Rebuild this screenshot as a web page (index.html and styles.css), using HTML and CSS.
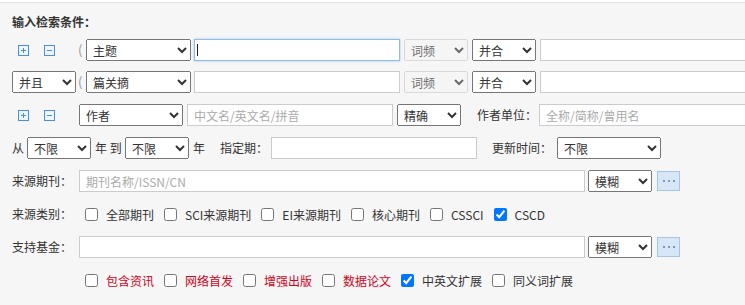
FILE: index.html
```html
<!DOCTYPE html>
<html lang="zh-CN">
<head>
<meta charset="utf-8">
<title>检索条件</title>
<link rel="stylesheet" href="styles.css">
</head>
<body>
<div class="panel">
  <div class="title">输入检索条件：</div>

  <div class="row r1">
    <div class="lead">
      <svg class="ico" width="11" height="11" viewBox="0 0 11 11"><rect x="0.5" y="0.5" width="10" height="10" fill="#eef5fd" stroke="#4a8fd6"/><path d="M3 5.5H8M5.5 3V8" stroke="#4a8fd6"/></svg>
      <svg class="ico" width="11" height="11" viewBox="0 0 11 11"><rect x="0.5" y="0.5" width="10" height="10" fill="#eef5fd" stroke="#4a8fd6"/><path d="M3 5.5H8" stroke="#4a8fd6"/></svg>
    </div>
    <span class="paren">(</span>
    <select class="sel sel-l"><option>主题</option></select>
    <span class="focus-wrap"><input class="inp inp-m focused" type="text"><span class="caret"></span></span>
    <select class="sel sel-s" disabled><option>词频</option></select>
    <select class="sel sel-s"><option>并合</option></select>
    <input class="inp inp-r" type="text">
  </div>

  <div class="row">
    <select class="sel sel-s sel-first"><option>并且</option></select>
    <span class="paren">(</span>
    <select class="sel sel-l"><option>篇关摘</option></select>
    <input class="inp inp-m" type="text">
    <select class="sel sel-s" disabled><option>词频</option></select>
    <select class="sel sel-s"><option>并合</option></select>
    <input class="inp inp-r" type="text">
  </div>

  <div class="row">
    <div class="lead lead3">
      <svg class="ico" width="11" height="11" viewBox="0 0 11 11"><rect x="0.5" y="0.5" width="10" height="10" fill="#eef5fd" stroke="#4a8fd6"/><path d="M3 5.5H8M5.5 3V8" stroke="#4a8fd6"/></svg>
      <svg class="ico" width="11" height="11" viewBox="0 0 11 11"><rect x="0.5" y="0.5" width="10" height="10" fill="#eef5fd" stroke="#4a8fd6"/><path d="M3 5.5H8" stroke="#4a8fd6"/></svg>
    </div>
    <select class="sel sel-l2"><option>作者</option></select>
    <input class="inp inp-m" type="text" placeholder="中文名/英文名/拼音">
    <select class="sel sel-s"><option>精确</option></select>
    <span class="lbl lbl-unit">作者单位：</span>
    <input class="inp inp-r" type="text" placeholder="全称/简称/曾用名">
  </div>

  <div class="row">
    <span class="txt t-from">从</span>
    <select class="sel sel-s"><option>不限</option></select>
    <span class="txt t-to">年 到</span>
    <select class="sel sel-s"><option>不限</option></select>
    <span class="txt t-year">年</span>
    <span class="lbl lbl-issue">指定期：</span>
    <input class="inp inp-m" type="text">
    <span class="lbl lbl-upd">更新时间：</span>
    <select class="sel sel-l2"><option>不限</option></select>
  </div>

  <div class="row">
    <span class="lbl lbl-row">来源期刊：</span>
    <input class="inp inp-w" type="text" placeholder="期刊名称/ISSN/CN">
    <select class="sel sel-s"><option>模糊</option></select>
    <span class="more"><i></i><i></i><i></i></span>
  </div>

  <div class="row">
    <span class="lbl lbl-cat">来源类别：</span>
    <label class="ck"><input type="checkbox"><span>全部期刊</span></label>
    <label class="ck"><input type="checkbox"><span>SCI来源期刊</span></label>
    <label class="ck"><input type="checkbox"><span>EI来源期刊</span></label>
    <label class="ck"><input type="checkbox"><span>核心期刊</span></label>
    <label class="ck"><input type="checkbox"><span>CSSCI</span></label>
    <label class="ck"><input type="checkbox" checked><span>CSCD</span></label>
  </div>

  <div class="row">
    <span class="lbl lbl-row">支持基金：</span>
    <input class="inp inp-w" type="text">
    <select class="sel sel-s"><option>模糊</option></select>
    <span class="more"><i></i><i></i><i></i></span>
  </div>

  <div class="row opts">
    <label class="ck red"><input type="checkbox"><span>包含资讯</span></label>
    <label class="ck red"><input type="checkbox"><span>网络首发</span></label>
    <label class="ck red"><input type="checkbox"><span>增强出版</span></label>
    <label class="ck red"><input type="checkbox"><span>数据论文</span></label>
    <label class="ck"><input type="checkbox" checked><span>中英文扩展</span></label>
    <label class="ck"><input type="checkbox"><span>同义词扩展</span></label>
  </div>
</div>
</body>
</html>
```

FILE: styles.css
```css
* { box-sizing: border-box; }

html, body {
  margin: 0;
  background: #ffffff;
}

body {
  font-family: "Noto Sans CJK SC", "Liberation Sans", sans-serif;
  font-size: 12px;
  color: #333333;
  overflow: hidden;
}

.panel {
  margin-top: 2px;
  border-top: 1px solid #e2e2e2;
  background: #f6f6f6;
  padding: 8px 0 0 12px;
  height: 303px;
  white-space: nowrap;
  overflow: hidden;
}

.title {
  font-weight: bold;
  height: 22px;
  line-height: 22px;
  margin-bottom: 6px;
}

.row {
  display: flex;
  align-items: center;
  height: 22px;
  margin-bottom: 11px;
}

.r1 { margin-bottom: 10px; }

.lead {
  width: 64px;
  flex: none;
  display: flex;
  align-items: center;
  padding-left: 6px;
  gap: 15px;
}

.lead3 { width: 67px; }

.ico { display: block; flex: none; }

.paren {
  width: 10px;
  flex: none;
  padding-left: 2px;
  color: #999999;
  font-size: 13px;
  line-height: 22px;
}

.sel {
  height: 22px;
  font-family: "Noto Sans CJK SC", "Liberation Sans", sans-serif;
  font-size: 12px;
  color: #333333;
  margin: 0 4px 0 0;
  padding: 0 0 0 2px;
  flex: none;
}

.sel-s { width: 64px; }
.sel-first { margin-right: 0; }
.sel-l { width: 105px; margin-right: 3px; }
.sel-l2 { width: 104px; }

.inp {
  height: 22px;
  border: 1px solid #cccccc;
  background: #ffffff;
  font-family: "Noto Sans CJK SC", "Liberation Sans", sans-serif;
  font-size: 12px;
  color: #333333;
  padding: 0 6px;
  margin: 0 4px 0 0;
  outline: none;
  flex: none;
}

.inp::placeholder { color: #aaaaaa; }

.inp-m { width: 206px; }
.inp-r { width: 220px; margin-right: 0; }
.inp-w { width: 506px; margin-right: 3px; }

.focus-wrap {
  position: relative;
  display: block;
  margin-right: 4px;
  flex: none;
}

.focus-wrap .inp { margin-right: 0; }

.focused {
  border-color: #8fbbe8;
  box-shadow: 0 0 2px rgba(100, 160, 230, 0.6);
}

.caret {
  position: absolute;
  left: 3px;
  top: 5px;
  width: 1px;
  height: 12px;
  background: #222222;
}

.lbl, .txt {
  line-height: 22px;
  flex: none;
}

.lbl-unit { margin-left: 12px; width: 62px; }
.t-from { width: 15px; }
.t-to { width: 30px; }
.t-year { width: 27px; }
.lbl-issue { width: 51px; }
.lbl-upd { margin-left: 11px; width: 65px; }
.lbl-row { width: 67px; }
.lbl-cat { width: 73px; }

.more {
  width: 23px;
  height: 20px;
  flex: none;
  background: #d8e7f8;
  border: 1px solid #a3c5ea;
  display: flex;
  align-items: center;
  justify-content: center;
  gap: 3px;
  margin-left: 1px;
}

.more i {
  display: block;
  width: 2px;
  height: 2px;
  background: #7b98c0;
}

.ck {
  display: flex;
  flex: none;
  align-items: center;
  margin-right: 10px;
}

.ck input {
  width: 13px;
  height: 13px;
  margin: 0 8px 0 0;
  flex: none;
}

.red { color: #d0021b; }

.opts { padding-left: 73px; }
```
